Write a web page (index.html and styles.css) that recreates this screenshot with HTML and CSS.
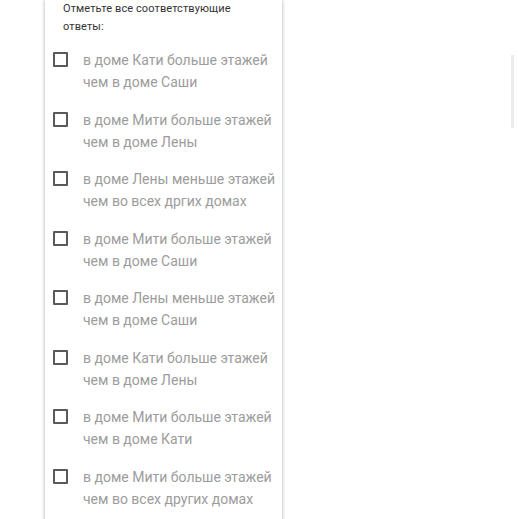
FILE: index.html
```html
<!DOCTYPE html>
<html lang="ru">
<head>
<meta charset="utf-8">
<link rel="stylesheet" href="styles.css">
</head>
<body>
<div class="page">
  <div class="card">
    <div class="hint">Отметьте все соответствующие ответы:</div>
    <ul class="options">
      <li class="option"><span class="box"></span><span class="label">в доме Кати больше этажей чем в доме Саши</span></li>
      <li class="option"><span class="box"></span><span class="label">в доме Мити больше этажей чем в доме Лены</span></li>
      <li class="option"><span class="box"></span><span class="label">в доме Лены меньше этажей чем во всех дргих домах</span></li>
      <li class="option"><span class="box"></span><span class="label">в доме Мити больше этажей чем в доме Саши</span></li>
      <li class="option"><span class="box"></span><span class="label">в доме Лены меньше этажей чем в доме Саши</span></li>
      <li class="option"><span class="box"></span><span class="label">в доме Кати больше этажей чем в доме Лены</span></li>
      <li class="option"><span class="box"></span><span class="label">в доме Мити больше этажей чем в доме Кати</span></li>
      <li class="option"><span class="box"></span><span class="label">в доме Мити больше этажей чем во всех других домах</span></li>
    </ul>
  </div>
  <div class="scrollbar"></div>
</div>
</body>
</html>
```
FILE: styles.css
```css
html, body {
  margin: 0;
  padding: 0;
  background: #ffffff;
  overflow: hidden;
}
body {
  font-family: Roboto, "Noto Sans", sans-serif;
}
.page {
  position: relative;
  width: 518px;
  height: 519px;
  overflow: hidden;
}
.card {
  margin-left: 45px;
  width: 237px;
  height: 560px;
  background: #fff;
  box-shadow: -1px 0 3px rgba(0,0,0,0.18), 1px 0 3px rgba(0,0,0,0.18);
  box-sizing: border-box;
  padding: 0 0 0 8px;
}
.hint {
  font-size: 11px;
  letter-spacing: 0.1px;
  line-height: 18px;
  color: #333;
  padding-left: 10px;
  width: 190px;
}
.options {
  list-style: none;
  margin: 13px 0 0 0;
  padding: 0;
  display: flex;
  flex-direction: column;
  gap: 15.5px;
}
.option {
  display: flex;
  align-items: flex-start;
}
.box {
  flex: none;
  width: 15px;
  height: 15px;
  box-sizing: border-box;
  border: 2px solid #5a5a5a;
  border-radius: 1px;
  margin-top: 3px;
}
.label {
  margin-left: 15px;
  font-size: 14px;
  line-height: 22px;
  color: #9c9c9c;
  width: 199px;
}
.scrollbar {
  position: absolute;
  left: 511px;
  top: 55px;
  width: 3px;
  height: 73px;
  background: #ececec;
}
```
